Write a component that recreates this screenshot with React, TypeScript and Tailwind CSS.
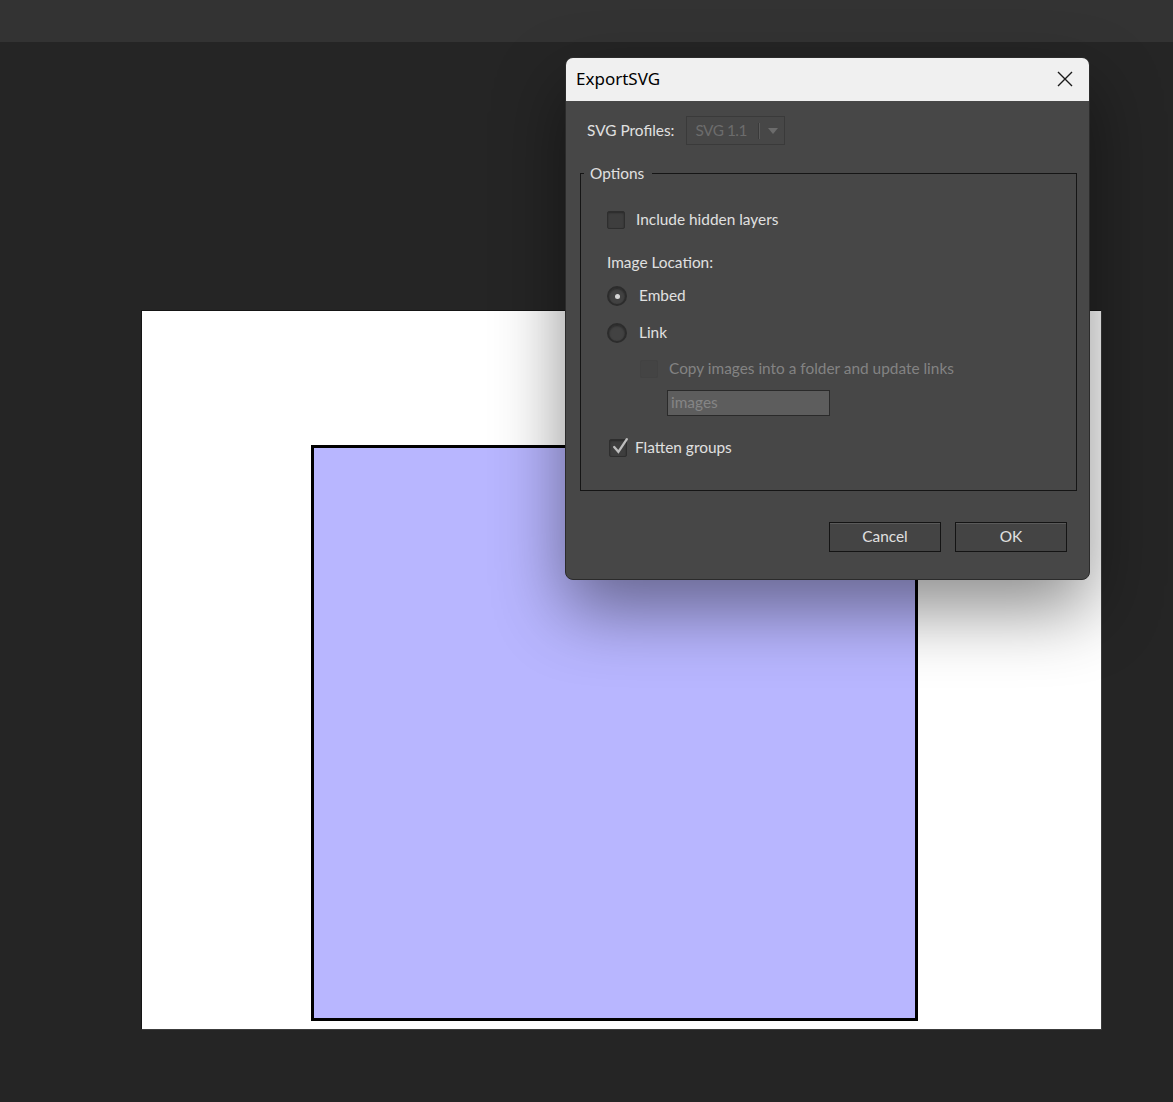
import { useState } from "react";

const labelFont = { fontFamily: "Lato, 'Open Sans', sans-serif" };

function Checkbox({ checked, disabled }: { checked?: boolean; disabled?: boolean }) {
  return (
    <span
      className={`relative flex h-[18px] w-[18px] items-center justify-center rounded-[2px] border ${
        disabled ? "border-[#424242] bg-[#444444]" : "border-[#2e2e2e] bg-[#3e3e3e] shadow-[inset_0_1px_2px_rgba(0,0,0,0.35)]"
      }`}
    >
      {checked && (
        <svg viewBox="0 0 18 18" className="absolute -top-[3px] left-[1px] h-[19px] w-[19px]">
          <path d="M3 9.5 L7 14 L15 2" fill="none" stroke="#bdbdbd" strokeWidth="2.2" strokeLinecap="round" />
        </svg>
      )}
    </span>
  );
}

function Radio({ checked }: { checked?: boolean }) {
  return (
    <span className="flex h-[20px] w-[20px] items-center justify-center rounded-full border-2 border-[#2c2c2c] bg-[#424242] shadow-[inset_0_1px_2px_rgba(0,0,0,0.4)]">
      {checked && <span className="h-[5px] w-[5px] rounded-full bg-[#d6d6d6]" />}
    </span>
  );
}

function ExportDialog() {
  const [location, setLocation] = useState("embed");

  return (
    <div className="absolute left-[565px] top-[57px] flex h-[523px] w-[525px] flex-col overflow-hidden rounded-[8px] border border-[#2b2b2b] bg-[#474747] shadow-[0_30px_70px_rgba(0,0,0,0.45)]">
      <div className="flex h-[43px] shrink-0 items-center justify-between bg-[#f0f0f0] pb-[2px] pl-[10px] pr-[16px]">
        <span className="text-[17px] text-black" style={{ fontFamily: "'Noto Sans', 'Open Sans', sans-serif" }}>
          ExportSVG
        </span>
        <svg viewBox="0 0 16 16" className="h-[16px] w-[16px]">
          <path d="M1 1 L15 15 M15 1 L1 15" stroke="#1a1a1a" strokeWidth="1.4" />
        </svg>
      </div>

      <div className="flex flex-1 flex-col pl-[14px] pr-[12px] text-[15.4px]" style={labelFont}>
        <div className="mt-[14px] flex h-[29px] items-center pl-[7px] pt-[2px]">
          <span className="text-[#e0e0e0]">SVG Profiles:</span>
          <div className="ml-[12px] flex h-[29px] w-[99px] items-center border border-[#3a3a3a] pl-[8px]">
            <span className="tracking-[-0.5px] text-[#6c6c6c]">SVG 1.1</span>
            <span className="ml-[11px] h-[16px] w-[2px] border-l border-r border-l-[#3a3a3a] border-r-[#5a5a5a]" />
            <svg viewBox="0 0 10 6" className="ml-[8px] h-[6px] w-[10px]">
              <path d="M0 0 H10 L5 6 Z" fill="#6c6c6c" />
            </svg>
          </div>
        </div>

        <fieldset className="mt-[18px] h-[329px] border border-[#151515]">
          <legend className="ml-[3px] pl-[6px] pr-[8px] leading-[22px] text-[#e0e0e0]">Options</legend>

          <div className="flex flex-col pl-[26px]">
            <div className="mt-[24px] flex h-[24px] items-center">
              <Checkbox />
              <span className="ml-[11px] text-[#e0e0e0]">Include hidden layers</span>
            </div>

            <div className="mt-[19px] flex h-[24px] items-center">
              <span className="text-[#e0e0e0]">Image Location:</span>
            </div>

            <label className="mt-[9px] flex h-[24px] items-center" onClick={() => setLocation("embed")}>
              <Radio checked={location === "embed"} />
              <span className="ml-[12px] text-[#e0e0e0]">Embed</span>
            </label>

            <label className="mt-[13px] flex h-[24px] items-center" onClick={() => setLocation("link")}>
              <Radio checked={location === "link"} />
              <span className="ml-[12px] text-[#e0e0e0]">Link</span>
            </label>

            <div className="mt-[12px] flex h-[24px] items-center pl-[33px]">
              <Checkbox disabled />
              <span className="ml-[11px] text-[#838383]">Copy images into a folder and update links</span>
            </div>

            <div className="ml-[60px] mt-[9px] flex h-[26px] w-[163px] items-center border border-[#2a2a2a] bg-[#5d5d5d] pl-[3px]">
              <span className="text-[#858585]">images</span>
            </div>

            <div className="mt-[20px] flex h-[24px] items-center pl-[2px]">
              <Checkbox checked />
              <span className="ml-[8px] text-[#e0e0e0]">Flatten groups</span>
            </div>
          </div>
        </fieldset>

        <div className="mt-[31px] flex justify-end gap-[14px] pr-[10px]">
          <button className="h-[30px] w-[112px] border border-[#141414] bg-[#444444] text-[#e0e0e0] shadow-[inset_0_1px_0_rgba(255,255,255,0.12)]">
            Cancel
          </button>
          <button className="h-[30px] w-[112px] border border-[#141414] bg-[#444444] text-[#e0e0e0] shadow-[inset_0_1px_0_rgba(255,255,255,0.12)]">
            OK
          </button>
        </div>
      </div>
    </div>
  );
}

export default function App() {
  return (
    <div className="relative h-[1102px] w-[1173px] overflow-hidden bg-[#252525]">
      <div className="h-[42px] bg-[#333333]" />
      <div className="pl-[141px] pt-[268px]">
        <div className="h-[720px] w-[961px] border border-[#3c3c3c] border-l-[#151515] border-t-[#151515] bg-white pl-[169px] pt-[134px]">
          <div className="h-[576px] w-[607px] border-[3px] border-black bg-[#b8b6ff]" />
        </div>
      </div>
      <ExportDialog />
    </div>
  );
}
